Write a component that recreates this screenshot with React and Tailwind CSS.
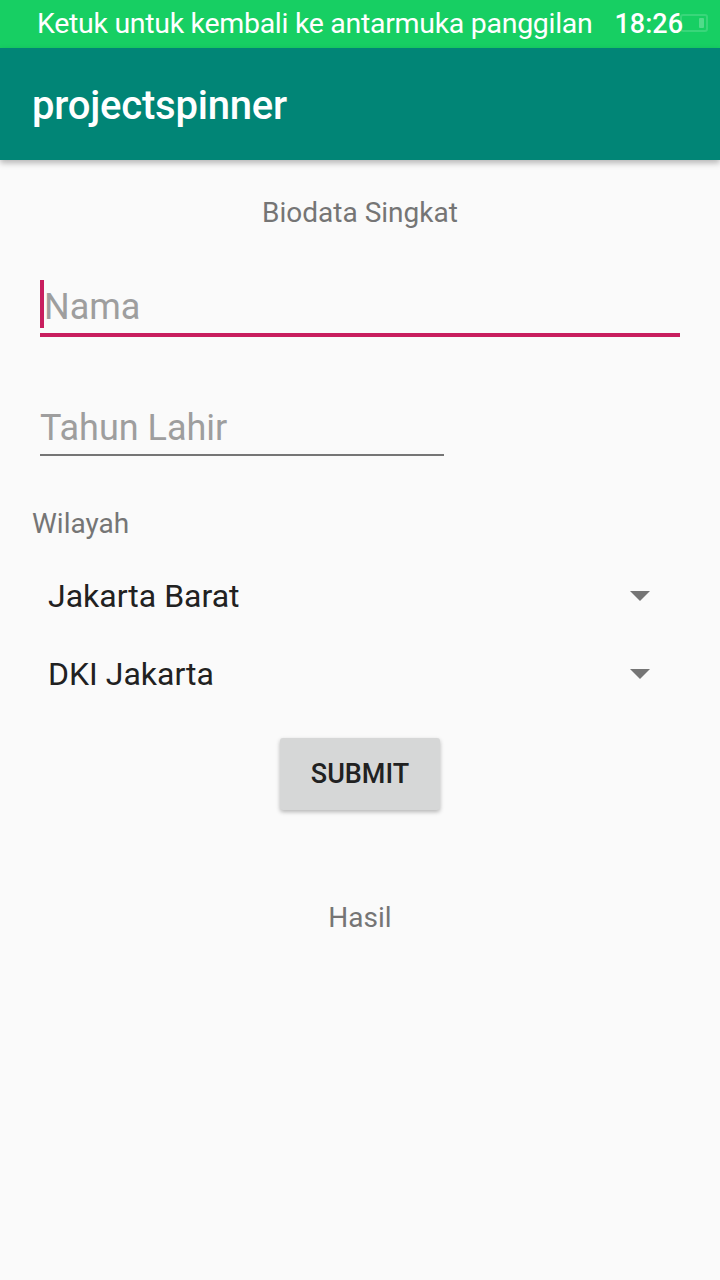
export default function App() {
  return (
    <div className="w-[720px] h-[1280px] bg-[#fafafa] flex flex-col overflow-hidden" style={{ fontFamily: "Roboto, 'Noto Sans', sans-serif" }}>
      {/* status bar */}
      <div className="h-[48px] bg-[#17cf63] flex items-center pl-[37px] pr-[12px] text-white relative">
        <span className="text-[28.5px] leading-none tracking-[-0.3px]">Ketuk untuk kembali ke antarmuka panggilan</span>
        <span className="ml-auto text-[27px] font-medium leading-none mr-[25px]">18:26</span>
        <div className="absolute right-[12px] top-[14px] w-[28px] h-[18px] rounded-[3px] border-[2px] border-white/15 flex justify-end items-stretch p-[2px]">
          <div className="w-[5px] bg-white/25 rounded-[1px]" />
        </div>
      </div>
      {/* toolbar */}
      <div className="h-[112px] bg-[#018576] flex items-center pl-[32px] shadow-[0_3px_6px_rgba(0,0,0,0.28)] relative z-10">
        <span className="text-[40px] font-medium text-white leading-none tracking-[-0.2px] pt-[4px]">projectspinner</span>
      </div>
      {/* content */}
      <div className="flex flex-col">
        <div className="mt-[38px] h-[30px] leading-[30px] text-center text-[28px] text-[#757575]">Biodata Singkat</div>

        <div className="mt-[52px] mx-[40px] flex flex-col">
          <div className="flex items-start h-[48px]">
            <div className="w-[4px] h-[48px] bg-[#c81e5e]" />
            <span className="text-[36px] leading-[48px] pt-[3px] text-[#9e9e9e]">Nama</span>
          </div>
          <div className="mt-[5px] h-[4px] bg-[#c81e5e]" />
        </div>

        <div className="mt-[67px] ml-[40px] w-[404px] flex flex-col">
          <span className="text-[36px] leading-[48px] text-[#9e9e9e]">Tahun Lahir</span>
          <div className="mt-[2px] h-[2px] bg-[#757575]" />
        </div>

        <div className="mt-[52px] ml-[32px] h-[32px] leading-[32px] text-[28px] text-[#757575]">Wilayah</div>

        <div className="mt-[17px] flex flex-col">
          <div className="h-[78px] flex items-center pl-[48px] pr-[70px]">
            <span className="text-[32px] text-[#212121]">Jakarta Barat</span>
            <svg className="ml-auto" width="20" height="10" viewBox="0 0 20 10"><path d="M0 0h20L10 10z" fill="#757575" /></svg>
          </div>
          <div className="h-[78px] flex items-center pl-[48px] pr-[70px]">
            <span className="text-[32px] text-[#212121]">DKI Jakarta</span>
            <svg className="ml-auto" width="20" height="10" viewBox="0 0 20 10"><path d="M0 0h20L10 10z" fill="#757575" /></svg>
          </div>
        </div>

        <div className="mt-[25px] flex justify-center">
          <button className="w-[160px] h-[72px] bg-[#d6d7d7] rounded-[3px] shadow-[0_2px_4px_rgba(0,0,0,0.28)] text-[27px] font-medium text-[#212121] flex items-center justify-center">SUBMIT</button>
        </div>

        <div className="mt-[92px] h-[32px] leading-[32px] text-center text-[28px] text-[#757575]">Hasil</div>
      </div>
    </div>
  );
}
